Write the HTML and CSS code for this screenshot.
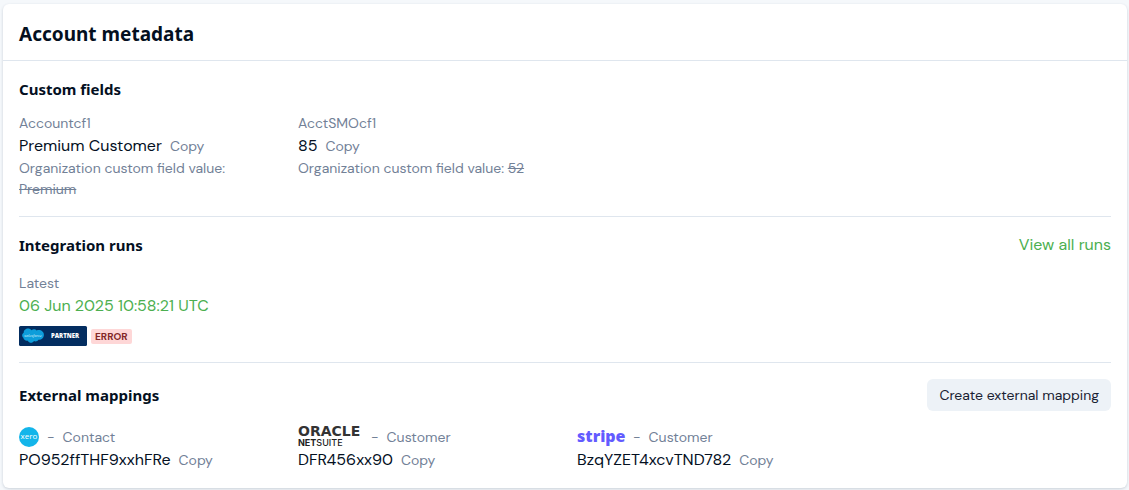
FILE: index.html
```html
<!doctype html>
<html lang="en">

<head>
    <meta charset="utf-8">
    <title>Account metadata</title>
    <link rel="stylesheet" href="styles.css">
</head>

<body>
    <main class="card">
        <header class="card-header">
            <h1>Account metadata</h1>
        </header>

        <section class="section fields">
            <div class="section-head">
                <h2>Custom fields</h2>
            </div>
            <div class="grid">
                <div class="item">
                    <div class="label">Accountcf1</div>
                    <div class="value">Premium Customer <button class="copy" type="button">Copy</button></div>
                    <div class="label">Organization custom field value: <s>Premium</s></div>
                </div>
                <div class="item">
                    <div class="label">AcctSMOcf1</div>
                    <div class="value">85 <button class="copy" type="button">Copy</button></div>
                    <div class="label">Organization custom field value: <s>52</s></div>
                </div>
            </div>
        </section>

        <section class="section">
            <div class="section-head">
                <h2>Integration runs</h2>
                <a class="link" href="#runs">View all runs</a>
            </div>
            <div class="item">
                <div class="label">Latest</div>
                <div class="value"><a class="link" href="#latest">06 Jun 2025 10:58:21 UTC</a></div>
                <div class="badges">
                    <svg class="logo" width="68" height="20" viewBox="0 0 68 20">
                        <rect width="68" height="20" rx="1.5" fill="#032d60" />
                        <path d="M12.600 4.200C14 2.700 16.400 2.800 17.700 4.400C20.700 3 25.400 5.200 24.900 9.300C24.600 12.500 22 14.200 19.500 13.700C18.500 15.300 16.500 15.800 15 15C13.500 17.500 10.100 17.300 8.900 14.700C6.500 15.200 4.600 13.700 4.400 11.800C2.500 10.500 3 7.600 4.700 6.800C4.500 2.700 10 .900 12.600 4.200Z" fill="#0d9dda" />
                        <text class="sf-name" x="14" y="11" text-anchor="middle">salesforce</text>
                        <text class="sf-partner" x="46" y="12" text-anchor="middle">PARTNER</text>
                    </svg>
                    <span class="tag">ERROR</span>
                </div>
            </div>
        </section>

        <section class="section">
            <div class="section-head">
                <h2>External mappings</h2>
                <button class="btn" type="button">Create external mapping</button>
            </div>
            <div class="grid">
                <div class="item">
                    <div class="label source">
                        <svg class="logo" width="20" height="20" viewBox="0 0 20 20">
                            <circle cx="10" cy="10" r="10" fill="#13b5ea" />
                            <text class="xero" x="10" y="12" text-anchor="middle">xero</text>
                        </svg>
                        <span>-</span>
                        <span>Contact</span>
                    </div>
                    <div class="value">PO952ffTHF9xxhFRe <button class="copy" type="button">Copy</button></div>
                </div>
                <div class="item">
                    <div class="label source">
                        <svg class="logo" width="65" height="20" viewBox="0 0 65 20">
                            <text class="oracle" x="0" y="9">ORACLE</text>
                            <text class="netsuite" x="0" y="19"><tspan class="net">NET</tspan>SUITE</text>
                        </svg>
                        <span>-</span>
                        <span>Customer</span>
                    </div>
                    <div class="value">DFR456xx90 <button class="copy" type="button">Copy</button></div>
                </div>
                <div class="item">
                    <div class="label source">
                        <svg class="logo" width="48" height="20" viewBox="0 0 48 20">
                            <text class="stripe" x="0" y="15">stripe</text>
                        </svg>
                        <span>-</span>
                        <span>Customer</span>
                    </div>
                    <div class="value">BzqYZET4xcvTND782 <button class="copy" type="button">Copy</button></div>
                </div>
            </div>
        </section>
    </main>
</body>

</html>
```
FILE: styles.css
```css
* {
    box-sizing: border-box;
}

body {
    margin: 0;
    padding: 4px 2px 2px 3px;
    background: #f5f8fb;
    color: #04101f;
    font-family: "DM Sans", Inter, sans-serif;
    font-size: 16px;
    line-height: 24px;
}

h1,
h2 {
    margin: 0;
    font-family: "Segoe UI", "Noto Sans", sans-serif;
    font-weight: 700;
    line-height: 24px;
}

h1 {
    font-size: 19px;
}

h2 {
    font-size: 15px;
}

.card {
    background: #fff;
    border-radius: 6px;
    box-shadow: 0 1px 3px rgba(30, 50, 80, 0.2);
}

.card-header {
    padding: 18px 16px 14px;
    border-bottom: 1px solid #dfe6ee;
}

.section {
    margin: 0 16px;
    padding: 16px 0;
    display: flex;
    flex-direction: column;
    gap: 16px;
}

.section + .section {
    border-top: 1px solid #dfe6ee;
}

.fields {
    gap: 12px;
}

.section-head {
    display: flex;
    justify-content: space-between;
    align-items: center;
}

.grid {
    display: grid;
    grid-template-columns: repeat(4, 1fr);
    gap: 24px;
}

.label {
    color: #728197;
    font-size: 14px;
    line-height: 21px;
}

.value {
    display: flex;
    align-items: baseline;
    gap: 8px;
}

.copy {
    padding: 0;
    border: 0;
    background: none;
    color: #728197;
    font-family: inherit;
    font-size: 14px;
    line-height: 21px;
    cursor: pointer;
}

.link {
    color: #4caf50;
    text-decoration: none;
}

.link:hover {
    text-decoration: underline;
}

.badges {
    margin-top: 8px;
    display: flex;
    align-items: center;
    gap: 4px;
}

.tag {
    padding: 0 4px;
    border-radius: 2px;
    background: #fed7d7;
    color: #822727;
    font-size: 10px;
    font-weight: 700;
    line-height: 15px;
}

.btn {
    padding: 0 12px;
    height: 32px;
    border: 0;
    border-radius: 6px;
    background: #edf2f7;
    color: #1a2233;
    font-family: inherit;
    font-size: 14px;
    cursor: pointer;
}

.source {
    display: flex;
    gap: 8px;
}

.logo {
    display: block;
    flex: none;
    overflow: visible;
}

.sf-name {
    fill: #d8f0fb;
    font: italic 4px "Open Sans", sans-serif;
}

.sf-partner {
    fill: #fff;
    font: 800 6px "Open Sans", sans-serif;
}

.xero {
    fill: #fff;
    font: 8px "Open Sans", sans-serif;
}

.oracle {
    fill: #333;
    font: bold 14px "DejaVu Sans", sans-serif;
}

.netsuite {
    fill: #222;
    font: 500 9px Inter, sans-serif;
}

.net {
    font-weight: 700;
}

.stripe {
    fill: #635bff;
    font: 900 16px "Noto Sans", sans-serif;
}
```
